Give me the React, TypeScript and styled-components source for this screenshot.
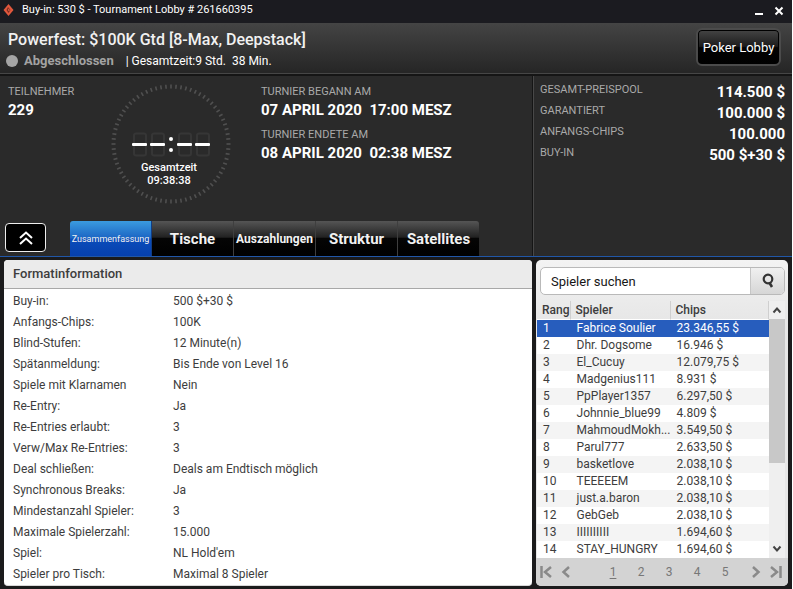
import React from "react";
import styled, { createGlobalStyle, css } from "styled-components";

const Global = createGlobalStyle`
  *, *::before, *::after { box-sizing: border-box; }
  html, body, #root { height: 100%; }
  body { margin: 0; background: #fff; font-family: Roboto, "Liberation Sans", sans-serif; font-size: 12px; }
  button, input { font-family: inherit; margin: 0; }
`;

const Window = styled.div`
  min-height: 100%;
  display: flex;
  flex-direction: column;
  margin-right: 1px;
  background: #1b1b1d;
  color: #fff;
`;

const TitleBar = styled.header`
  display: flex;
  align-items: center;
  height: 23px;
  padding: 0 8px 4px 3px;
  background: #1b1b20;
  font-size: 11px;
`;

const TitleText = styled.span`
  flex: 1;
  padding-left: 8px;
`;

const WindowButton = styled.button`
  display: flex;
  width: 10px;
  height: 12px;
  margin-left: 10px;
  padding: 0;
  border: 0;
  background: none;
`;

const Banner = styled.section`
  display: flex;
  justify-content: space-between;
  align-items: flex-start;
  height: 53px;
  padding: 5px 11px 0 6px;
  background: linear-gradient(#444, #262626 49px, #262626);
  border-bottom: 2px solid #151515;
  box-shadow: inset 0 -1px #464646;
`;

const Heading = styled.h1`
  margin: 0;
  padding: 1px 2px 0;
  font-size: 16px;
  line-height: 22px;
  font-weight: 500;
  color: #f1f1f1;
`;

const Status = styled.div`
  display: flex;
  align-items: center;
  padding-top: 1px;
  line-height: 18px;
`;

const Dot = styled.span`
  width: 12px;
  height: 12px;
  margin-right: 6px;
  border-radius: 50%;
  background: #a5a5a5;
`;

const StatusName = styled.strong`
  margin-right: 12px;
  font-size: 13px;
  font-weight: 700;
  color: #a3a3a3;
`;

const LobbyButton = styled.button`
  width: 85px;
  height: 38px;
  padding: 0;
  border: 2px solid #4b4b4b;
  border-radius: 6px;
  background: linear-gradient(#454545, #1c1c1c 48%, #030303 52%, #000);
  box-shadow: inset 0 0 0 1px #000;
  color: #fff;
  font-size: 13px;
`;

const Info = styled.section`
  display: grid;
  grid-template-columns: 1fr 259px;
  height: 181px;
  background: #2a2a2a;
  border-bottom: 1px solid #2157a8;
`;

const Overview = styled.div`
  display: flex;
  flex-direction: column;
  justify-content: space-between;
  border-right: 1px solid #151515;
`;

const Facts = styled.div`
  display: grid;
  grid-template-columns: 102px 151px 1fr;
  padding: 7px 0 0 8px;
`;

const Caption = styled.div`
  color: #a9a9a9;
  font-size: 11px;
  line-height: 17px;
`;

const Value = styled.div`
  font-size: 15px;
  line-height: 20px;
  font-weight: 700;
  white-space: pre;
`;

const Stack = styled.div`
  display: flex;
  flex-direction: column;
`;

const Dates = styled(Stack)`
  gap: 6px;
`;

const Prizes = styled.dl`
  margin: 0;
  padding: 3px 7px 0 6px;
  border-left: 1px solid #484848;
`;

const Prize = styled.div`
  display: flex;
  justify-content: space-between;
  height: 21px;
  dt { color: #a9a9a9; font-size: 11px; line-height: 21px; }
  dd { margin: 0; font-size: 15px; line-height: 26px; font-weight: 700; }
`;

const TabBar = styled.nav`
  display: flex;
  align-items: flex-end;
  padding-left: 5px;
`;

const CollapseButton = styled.button`
  display: flex;
  align-items: center;
  justify-content: center;
  width: 41px;
  height: 29px;
  margin: 0 24px 4px 0;
  padding: 0;
  border: 1px solid #eee;
  border-radius: 4px;
  background: #000;
`;

const Tab = styled.button<{ $active?: boolean; $size: number }>`
  width: 82px;
  height: 35px;
  padding: 0;
  border: 0;
  border-right: 1px solid #3f3f3f;
  background: linear-gradient(#555, #222 46%, #050505 50%, #000);
  color: #f2f2f2;
  font-size: ${(p) => p.$size}px;
  font-weight: 700;
  white-space: nowrap;
  &:first-of-type { border-radius: 3px 0 0 0; }
  &:last-of-type { width: 81px; border-radius: 0 3px 0 0; border-right: 0; }
  ${(p) =>
    p.$active &&
    css`
      background: linear-gradient(#3b9bdf, #1c66c4 48%, #0a4cba 52%, #0640ae);
      border-color: #123d83;
      font-weight: 400;
    `}
`;

const Tabs = styled.div`
  display: flex;
`;

const Main = styled.main`
  flex: 1;
  display: grid;
  grid-template-columns: 1fr 252px;
  gap: 4px;
  padding: 3px 4px 4px;
  background: #1b1b1c;
`;

const Format = styled.section`
  overflow: hidden;
  border-radius: 4px;
  background: #fff;
  color: #3d3d3d;
  border-bottom: 1px solid #d8d8d8;
`;

const FormatTitle = styled.h2`
  margin: 0;
  padding: 0 9px;
  background: #ebebeb;
  border-bottom: 1px solid #a8a8a8;
  font-size: 13px;
  line-height: 28px;
  font-weight: 500;
`;

const FormatTable = styled.table`
  margin-top: 2px;
  border-collapse: collapse;
  th, td { height: 21px; padding: 0; text-align: left; font-weight: 400; line-height: 21px; }
  th { width: 169px; padding-left: 9px; }
`;

const Players = styled.section`
  display: flex;
  flex-direction: column;
  overflow: hidden;
  border-radius: 5px;
  background: linear-gradient(#f3f3f3, #e7e7e7 60px);
  color: #3d3d3d;
`;

const Search = styled.form`
  display: flex;
  height: 28px;
  margin: 7px 3px 6px 4px;
  border: 1px solid #b9b9b9;
  border-radius: 5px;
  overflow: hidden;
  background: #fff;
`;

const SearchInput = styled.input`
  flex: 1;
  min-width: 0;
  padding: 0 10px;
  border: 0;
  background: none;
  font-size: 13px;
  &::placeholder { color: #161616; opacity: 1; }
`;

const SearchButton = styled.button`
  display: flex;
  align-items: center;
  justify-content: center;
  width: 34px;
  padding: 0;
  border: 0;
  border-left: 1px solid #c6c6c6;
  background: linear-gradient(#f0f0f0, #d6d6d6);
`;

const ListArea = styled.div`
  display: flex;
  padding: 0 3px 0 1px;
`;

const List = styled.table`
  flex: 1;
  table-layout: fixed;
  border-spacing: 0;
  th { height: 19px; padding: 0 0 0 5px; text-align: left; font-weight: 500; line-height: 17px; border-right: 1px solid #cfcfcf; border-bottom: 1px solid #fff; }
  td { height: 17px; padding: 0 0 0 6px; line-height: 17px; white-space: nowrap; overflow: hidden; text-overflow: ellipsis; }
`;

const PlayerRow = styled.tr<{ $selected: boolean }>`
  background: #fff;
  &:nth-child(odd) { background: #f4f4f4; }
  ${(p) => p.$selected && css`&&& { background: #275dbd; color: #fff; }`}
`;

const RankHead = styled.th`width: 33px;`;
const NameHead = styled.th`width: 100px;`;

const ScrollBar = styled.div`
  display: flex;
  flex-direction: column;
  width: 16px;
  background: #efefef;
`;

const ScrollButton = styled.button`
  display: flex;
  align-items: center;
  justify-content: center;
  height: 18px;
  padding: 0;
  border: 0;
  background: #efefef;
`;

const Thumb = styled.div`
  height: 144px;
  margin-bottom: auto;
  background: #c8c8c8;
`;

const Pager = styled.nav`
  flex: 1;
  display: flex;
  align-items: center;
  padding-right: 2px;
  background: #d3d3d3;
`;

const PageButton = styled.button<{ $current?: boolean }>`
  width: 28px;
  padding: 0;
  border: 0;
  background: none;
  color: #777;
  font-size: 12px;
  text-decoration: ${(p) => (p.$current ? "underline" : "none")};
  text-underline-offset: 2px;
`;

const Pages = styled.div`
  flex: 1;
  display: flex;
  justify-content: center;
  padding-left: 16px;
`;

const StepButton = styled.button`
  display: flex;
  justify-content: center;
  width: 20px;
  padding: 0;
  border: 0;
  background: none;
`;

const formatRows = [
  ["Buy-in:", "500 $+30 $"],
  ["Anfangs-Chips:", "100K"],
  ["Blind-Stufen:", "12 Minute(n)"],
  ["Spätanmeldung:", "Bis Ende von Level 16"],
  ["Spiele mit Klarnamen", "Nein"],
  ["Re-Entry:", "Ja"],
  ["Re-Entries erlaubt:", "3"],
  ["Verw/Max Re-Entries:", "3"],
  ["Deal schließen:", "Deals am Endtisch möglich"],
  ["Synchronous Breaks:", "Ja"],
  ["Mindestanzahl Spieler:", "3"],
  ["Maximale Spielerzahl:", "15.000"],
  ["Spiel:", "NL Hold'em"],
  ["Spieler pro Tisch:", "Maximal 8 Spieler"],
];

const prizes = [
  ["GESAMT-PREISPOOL", "114.500 $"],
  ["GARANTIERT", "100.000 $"],
  ["ANFANGS-CHIPS", "100.000"],
  ["BUY-IN", "500 $+30 $"],
];

const players = [
  ["Fabrice Soulier", "23.346,55 $"],
  ["Dhr. Dogsome", "16.946 $"],
  ["El_Cucuy", "12.079,75 $"],
  ["Madgenius111", "8.931 $"],
  ["PpPlayer1357", "6.297,50 $"],
  ["Johnnie_blue99", "4.809 $"],
  ["MahmoudMokh...", "3.549,50 $"],
  ["Parul777", "2.633,50 $"],
  ["basketlove", "2.038,10 $"],
  ["TEEEEEM", "2.038,10 $"],
  ["just.a.baron", "2.038,10 $"],
  ["GebGeb", "2.038,10 $"],
  ["IIIIIIIIII", "1.694,60 $"],
  ["STAY_HUNGRY", "1.694,60 $"],
];

const tabs = [
  { label: "Zusammenfassung", size: 9 },
  { label: "Tische", size: 15 },
  { label: "Auszahlungen", size: 12 },
  { label: "Struktur", size: 15 },
  { label: "Satellites", size: 15 },
];

const ClockBox = styled.div`
  display: grid;
  width: 122px;
  height: 122px;
  > * { grid-area: 1 / 1; }
`;

const ClockText = styled.div`
  align-self: start;
  padding-top: 78px;
  padding-right: 4px;
  text-align: center;
  font-size: 11px;
  line-height: 13px;
  font-weight: 500;
`;

const Clock = () => (
  <ClockBox>
    <svg width="122" height="122" viewBox="0 0 122 122" aria-hidden="true">
      {Array.from({ length: 72 }, (_, i) => (
        <line key={i} x1="61" y1="1.5" x2="61" y2="5.5" stroke="#505050" strokeWidth="1.6" transform={`rotate(${i * 5} 61 61)`} />
      ))}
      {[23, 41, 68, 86].map((x) => (
        <g key={x}>
          <rect x={x + 1} y="50.5" width="12" height="22" rx="2" fill="none" stroke="#363636" strokeWidth="2" />
          <rect x={x - 1} y="60" width="15" height="3" rx="1" fill="#fff" />
        </g>
      ))}
      <circle cx="61" cy="56" r="2" fill="#fff" />
      <circle cx="61" cy="67" r="2" fill="#fff" />
    </svg>
    <ClockText>
      <div>Gesamtzeit</div>
      <div>09:38:38</div>
    </ClockText>
  </ClockBox>
);

const Line = ({ d, w, h, color = "#8a8a8a", sw = 2 }: { d: string; w: number; h: number; color?: string; sw?: number }) => (
  <svg width={w} height={h} viewBox={`0 0 ${w} ${h}`} fill="none" stroke={color} strokeWidth={sw} aria-hidden="true">
    <path d={d} />
  </svg>
);

export default function App() {
  return (
    <>
      <Global />
      <Window>
        <TitleBar>
          <svg width="11" height="12" viewBox="0 0 11 12" aria-hidden="true">
            <path d="M5.5 0 10.5 6 5.5 12 .5 6Z" fill="#e2583d" />
            <path d="M5 3 7.5 6 5.5 9 3.5 6Z" fill="#7c2b20" />
            <path d="M5.3 4.5 7 6.2 5.3 7Z" fill="#ef7654" />
          </svg>
          <TitleText>Buy-in: 530 $ - Tournament Lobby # 261660395</TitleText>
          <WindowButton aria-label="Minimieren"><Line w={10} h={12} d="M1 10h8" color="#fff" /></WindowButton>
          <WindowButton aria-label="Schließen"><Line w={10} h={12} d="M1.500 3.500l7 7M8.500 3.500l-7 7" color="#fff" /></WindowButton>
        </TitleBar>
        <Banner>
          <div>
            <Heading>Powerfest: $100K Gtd [8-Max, Deepstack]</Heading>
            <Status>
              <Dot />
              <StatusName>Abgeschlossen</StatusName>
              <span>| Gesamtzeit:9 Std.&nbsp; 38 Min.</span>
            </Status>
          </div>
          <LobbyButton>Poker Lobby</LobbyButton>
        </Banner>
        <Info>
          <Overview>
            <Facts>
              <Stack>
                <Caption>TEILNEHMER</Caption>
                <Value>229</Value>
              </Stack>
              <Clock />
              <Dates>
                <div>
                  <Caption>TURNIER BEGANN AM</Caption>
                  <Value>07 APRIL 2020  17:00 MESZ</Value>
                </div>
                <div>
                  <Caption>TURNIER ENDETE AM</Caption>
                  <Value>08 APRIL 2020  02:38 MESZ</Value>
                </div>
              </Dates>
            </Facts>
            <TabBar>
              <CollapseButton aria-label="Einklappen">
                <Line w={14} h={14} d="M1 7l6-5.500 6 5.500M1 13l6-5.500 6 5.500" color="#fff" />
              </CollapseButton>
              <Tabs>
                {tabs.map((t, i) => (
                  <Tab key={t.label} $size={t.size} $active={i === 0}>{t.label}</Tab>
                ))}
              </Tabs>
            </TabBar>
          </Overview>
          <Prizes>
            {prizes.map(([k, v]) => (
              <Prize key={k}><dt>{k}</dt><dd>{v}</dd></Prize>
            ))}
          </Prizes>
        </Info>
        <Main>
          <Format>
            <FormatTitle>Formatinformation</FormatTitle>
            <FormatTable>
              <tbody>
                {formatRows.map(([k, v]) => (
                  <tr key={k}><th scope="row">{k}</th><td>{v}</td></tr>
                ))}
              </tbody>
            </FormatTable>
          </Format>
          <Players>
            <Search onSubmit={(e) => e.preventDefault()}>
              <SearchInput aria-label="Spieler suchen" placeholder="Spieler suchen" />
              <SearchButton aria-label="Suchen">
                <svg width="14" height="16" viewBox="0 0 14 16" fill="none" stroke="#333" aria-hidden="true">
                  <circle cx="7" cy="6" r="4.300" strokeWidth="2.200" />
                  <path d="M8.300 9.500l2.700 4.500" strokeWidth="2.600" />
                </svg>
              </SearchButton>
            </Search>
            <ListArea>
              <List>
                <thead>
                  <tr>
                    <RankHead>Rang</RankHead>
                    <NameHead>Spieler</NameHead>
                    <th>Chips</th>
                  </tr>
                </thead>
                <tbody>
                  {players.map(([name, chips], i) => (
                    <PlayerRow key={name} $selected={i === 0}>
                      <td>{i + 1}</td>
                      <td>{name}</td>
                      <td>{chips}</td>
                    </PlayerRow>
                  ))}
                </tbody>
              </List>
              <ScrollBar>
                <ScrollButton aria-label="Nach oben"><Line w={10} h={8} d="M1.500 6.500L5 2.500l3.500 4" color="#444" /></ScrollButton>
                <Thumb />
                <ScrollButton aria-label="Nach unten"><Line w={10} h={8} d="M1.500 1.500L5 5.500l3.500-4" color="#444" /></ScrollButton>
              </ScrollBar>
            </ListArea>
            <Pager aria-label="Seiten">
              <StepButton aria-label="Erste Seite"><Line w={12} h={14} d="M1.500 1v12M11 2L5 7l6 5" sw={2.5} /></StepButton>
              <StepButton aria-label="Vorherige Seite"><Line w={12} h={14} d="M9 2L3.500 7l5.500 5" sw={2.5} /></StepButton>
              <Pages>
                {[1, 2, 3, 4, 5].map((n) => (
                  <PageButton key={n} $current={n === 1}>{n}</PageButton>
                ))}
              </Pages>
              <StepButton aria-label="Nächste Seite"><Line w={12} h={14} d="M3 2l5.500 5L3 12" sw={2.5} /></StepButton>
              <StepButton aria-label="Letzte Seite"><Line w={12} h={14} d="M1 2l6 5-6 5M10.500 1v12" sw={2.5} /></StepButton>
            </Pager>
          </Players>
        </Main>
      </Window>
    </>
  );
}
